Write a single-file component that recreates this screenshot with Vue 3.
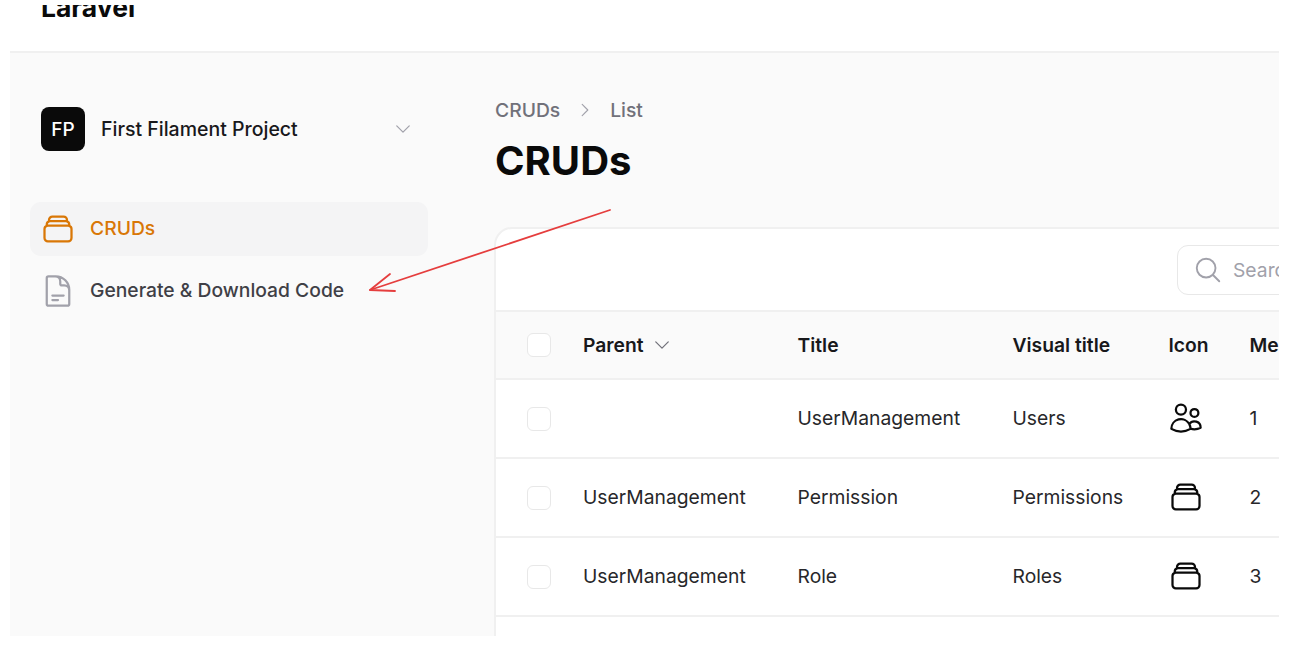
<script setup>
const stack = "M6 6.878V6a2.25 2.25 0 0 1 2.25-2.25h7.5A2.25 2.25 0 0 1 18 6v.878m-12 0c.235-.083.487-.128.75-.128h10.5c.263 0 .515.045.75.128m-12 0A2.25 2.25 0 0 0 4.5 9v.878m13.5-3A2.25 2.25 0 0 1 19.5 9v.878m0 0a2.246 2.246 0 0 0-.75-.128H5.25c-.263 0-.515.045-.75.128m15 0A2.25 2.25 0 0 1 21 12v6a2.25 2.25 0 0 1-2.25 2.25H5.25A2.25 2.25 0 0 1 3 18v-6c0-.98.626-1.813 1.5-2.122"
const users = "M15 19.128a9.38 9.38 0 0 0 2.625.372 9.337 9.337 0 0 0 4.121-.952 4.125 4.125 0 0 0-7.533-2.493M15 19.128v-.003c0-1.113-.285-2.16-.786-3.07M15 19.128v.106A12.318 12.318 0 0 1 8.624 21c-2.331 0-4.512-.645-6.374-1.766l-.001-.109a6.375 6.375 0 0 1 11.964-3.07M12 6.375a3.375 3.375 0 1 1-6.75 0 3.375 3.375 0 0 1 6.75 0Zm8.25 2.25a2.625 2.625 0 1 1-5.25 0 2.625 2.625 0 0 1 5.25 0Z"
const doc = "M19.5 14.25v-2.625a3.375 3.375 0 0 0-3.375-3.375h-1.5A1.125 1.125 0 0 1 13.5 7.125v-1.5a3.375 3.375 0 0 0-3.375-3.375H8.25m0 12.75h7.5m-7.5 3H12M10.5 2.25H5.625c-.621 0-1.125.504-1.125 1.125v17.25c0 .621.504 1.125 1.125 1.125h12.75c.621 0 1.125-.504 1.125-1.125V11.25a9 9 0 0 0-9-9Z"
const rows = [
  { parent: "", title: "UserManagement", visual: "Users", icon: users, order: 1 },
  { parent: "UserManagement", title: "Permission", visual: "Permissions", icon: stack, order: 2 },
  { parent: "UserManagement", title: "Role", visual: "Roles", icon: stack, order: 3 },
]
</script>

<template>
  <div class="page">
    <div class="frame">
      <header class="topbar"><div class="brand-clip"><span class="brand">Laravel</span></div></header>
      <div class="body">
        <aside class="sidebar">
          <div class="tenant">
            <span class="avatar">FP</span>
            <span class="tenant-name">First Filament Project</span>
            <svg class="tenant-chevron" viewBox="0 0 24 24" fill="none" stroke="currentColor" stroke-width="1.5" stroke-linecap="round" stroke-linejoin="round"><path d="m19.5 8.25-7.5 7.5-7.5-7.5" /></svg>
          </div>
          <nav class="nav">
            <a class="nav-item active">
              <svg class="ic" viewBox="0 0 24 24" fill="none" stroke="currentColor" stroke-width="1.5" stroke-linecap="round" stroke-linejoin="round"><path :d="stack" /></svg>
              <span class="nav-label">CRUDs</span>
            </a>
            <a class="nav-item">
              <svg class="ic" viewBox="0 0 24 24" fill="none" stroke="currentColor" stroke-width="1.5" stroke-linecap="round" stroke-linejoin="round"><path :d="doc" /></svg>
              <span class="nav-label">Generate &amp; Download Code</span>
            </a>
          </nav>
        </aside>
        <main class="main">
          <div class="crumbs">
            <span>CRUDs</span>
            <svg class="crumb-sep" viewBox="0 0 24 24" fill="none" stroke="currentColor" stroke-width="1.5" stroke-linecap="round" stroke-linejoin="round"><path d="m8.25 4.5 7.5 7.5-7.5 7.5" /></svg>
            <span>List</span>
          </div>
          <h1 class="title">CRUDs</h1>
          <section class="card">
            <div class="toolbar">
              <div class="search">
                <svg class="search-ic" viewBox="0 0 24 24" fill="none" stroke="currentColor" stroke-width="1.5" stroke-linecap="round" stroke-linejoin="round"><path d="m21 21-5.197-5.197m0 0A7.5 7.5 0 1 0 5.196 5.196a7.5 7.5 0 0 0 10.607 10.607Z" /></svg>
                <span>Search</span>
              </div>
            </div>
            <table class="table">
              <colgroup>
                <col class="c-check" /><col class="c-parent" /><col class="c-title" /><col class="c-visual" /><col class="c-icon" /><col class="c-order" />
              </colgroup>
              <thead>
                <tr>
                  <th><span class="box"></span></th>
                  <th>
                    <span class="sort">Parent
                      <svg class="sort-ic" viewBox="0 0 24 24" fill="none" stroke="currentColor" stroke-width="1.5" stroke-linecap="round" stroke-linejoin="round"><path d="m19.5 8.25-7.5 7.5-7.5-7.5" /></svg>
                    </span>
                  </th>
                  <th>Title</th>
                  <th>Visual title</th>
                  <th>Icon</th>
                  <th>Menu order</th>
                </tr>
              </thead>
              <tbody>
                <tr v-for="r in rows" :key="r.order">
                  <td><span class="box"></span></td>
                  <td class="txt">{{ r.parent }}</td>
                  <td class="txt">{{ r.title }}</td>
                  <td class="txt">{{ r.visual }}</td>
                  <td>
                    <svg class="ic dark" viewBox="0 0 24 24" fill="none" stroke="currentColor" stroke-width="1.5" stroke-linecap="round" stroke-linejoin="round"><path :d="r.icon" /></svg>
                  </td>
                  <td class="txt">{{ r.order }}</td>
                </tr>
              </tbody>
            </table>
            <div class="table-foot"></div>
          </section>
        </main>
      </div>
    </div>
    <svg class="arrow" viewBox="0 0 1289 645" fill="none" stroke="#e53e3e" stroke-width="1.8" stroke-linecap="round" stroke-linejoin="round">
      <path d="M610 210 370 290" />
      <path d="M390 274 370 290 395 291" />
    </svg>
  </div>
</template>

<style>
html, body { margin: 0; background: #fff; overflow: hidden; }
</style>

<style scoped>
.page {
  position: relative;
  height: 645px;
  padding: 0 10px;
  box-sizing: border-box;
  background: #fff;
  font-family: Inter, "Liberation Sans", sans-serif;
  font-size: 19.3px;
  color: #18181b;
}
.frame {
  height: 636px;
  overflow: hidden;
  display: flex;
  flex-direction: column;
}
.topbar {
  height: 53px;
  flex: none;
  box-sizing: border-box;
  border-bottom: 2px solid #f0f0f0;
  padding: 5px 0 0 31px;
}
.brand-clip { height: 13px; overflow: hidden; }
.brand {
  display: block;
  margin-top: -16px;
  font-size: 26.5px;
  line-height: 36px;
  font-weight: 700;
  color: #0a0a0a;
}
.body { flex: 1; min-height: 0; display: flex; background: #fafafa; }
.sidebar { width: 484px; flex: none; box-sizing: border-box; padding: 54px 66px 0 20px; }
.tenant { display: flex; align-items: center; padding: 0 15px 0 11px; gap: 16px; }
.avatar {
  width: 44px; height: 44px; flex: none; border-radius: 8px;
  background: #0a0a0a; color: #fff;
  display: flex; align-items: center; justify-content: center;
  font-size: 19px; font-weight: 500;
}
.tenant-name { flex: 1; font-size: 19.5px; font-weight: 500; color: #18181b; }
.tenant-chevron { width: 20px; height: 20px; color: #a1a1aa; }
.nav { margin-top: 51px; display: flex; flex-direction: column; gap: 8px; }
.nav-item {
  display: flex; align-items: center; gap: 14px;
  height: 54px; padding: 0 10px; border-radius: 11px;
  color: #3f3f46; font-weight: 500;
}
.nav-label { margin-bottom: 2px; }
.nav-item .ic { color: #a1a1aa; }
.nav-item.active { background: #f4f4f5; color: #d97706; }
.nav-item.active .ic { color: #d97706; }
.ic { width: 36px; height: 36px; flex: none; display: block; }
.ic.dark { color: #0a0a0a; margin: -1px 0 0 -1px; }
.main { flex: 1; min-width: 0; overflow: hidden; padding-top: 43px; }
.crumbs { display: flex; align-items: center; gap: 16px; line-height: 28px; color: #71717a; font-weight: 500; padding-left: 1px; }
.crumb-sep { width: 18px; height: 18px; color: #a1a1aa; }
.title { margin: 13px 0 0 1px; font-size: 40px; line-height: 48px; font-weight: 700; color: #0a0a0a; }
.card {
  margin-top: 42px; width: 1100px; box-sizing: border-box;
  background: #fff; border: 2px solid #f0f0f0; border-radius: 18px;
}
.toolbar { height: 81px; box-sizing: border-box; display: flex; align-items: center; justify-content: flex-end; padding-right: 33px; }
.search {
  width: 382px; height: 50px; box-sizing: border-box;
  display: flex; align-items: center; gap: 10px; padding-left: 15px;
  border: 1.5px solid #e8e8e8; border-radius: 11px; color: #a1a1aa;
}
.search-ic { width: 30px; height: 30px; flex: none; color: #a1a1aa; }
.table { table-layout: fixed; width: 100%; border-collapse: collapse; }
.c-check { width: 87px; }
.c-parent { width: 214.5px; }
.c-title { width: 215px; }
.c-visual { width: 156px; }
.c-icon { width: 81px; }
th, td { text-align: left; padding: 0; white-space: nowrap; font-size: 19.3px; }
th { height: 66px; background: #fafafa; font-weight: 600; color: #18181b; border-top: 2px solid #f0f0f0; border-bottom: 2px solid #f0f0f0; }
td { height: 77px; border-bottom: 2px solid #f0f0f0; color: #27272a; }
td.txt { height: 75px; padding-bottom: 2px; }
th:first-child, td:first-child { padding-left: 31px; }
.box {
  display: block; width: 24px; height: 24px; box-sizing: border-box;
  background: #fff; border: 1.5px solid #e8e8e8; border-radius: 6px;
}
.sort { display: inline-flex; align-items: center; gap: 8px; }
.sort-ic { width: 20px; height: 20px; color: #71717a; }
.table-foot { height: 60px; }
.arrow { position: absolute; left: 0; top: 0; width: 1289px; height: 645px; pointer-events: none; }
</style>
